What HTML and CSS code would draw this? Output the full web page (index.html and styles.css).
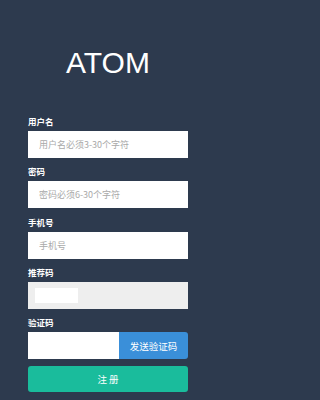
FILE: index.html
```html
<!DOCTYPE html>
<html lang="zh-CN">
<head>
<meta charset="utf-8">
<title>ATOM 注册</title>
<link rel="stylesheet" href="styles.css">
</head>
<body>
<div class="page">
  <h1 class="title">ATOM</h1>
  <form class="form">
    <div class="group">
      <label class="label">用户名</label>
      <input class="field" type="text" placeholder="用户名必须3-30个字符">
    </div>
    <div class="group">
      <label class="label">密码</label>
      <input class="field" type="password" placeholder="密码必须6-30个字符">
    </div>
    <div class="group">
      <label class="label">手机号</label>
      <input class="field" type="text" placeholder="手机号">
    </div>
    <div class="group">
      <label class="label">推荐码</label>
      <div class="field field-disabled"><span class="chip"></span></div>
    </div>
    <div class="group">
      <label class="label">验证码</label>
      <div class="code-row">
        <input class="field code-field" type="text">
        <button class="send" type="button">发送验证码</button>
      </div>
    </div>
    <button class="submit" type="button">注 册</button>
  </form>
</div>
</body>
</html>
```
FILE: styles.css
```css
* { box-sizing: border-box; }
html, body {
  margin: 0;
  padding: 0;
  background: #2d3a4e;
}
body {
  width: 214px;
  height: 400px;
  overflow: hidden;
  font-family: "Noto Sans CJK SC", "Liberation Sans", sans-serif;
}
.page {
  padding: 46px 26px 0 28px;
}
.title {
  margin: 0;
  font-family: "Liberation Sans", Arial, sans-serif;
  font-weight: normal;
  font-size: 30px;
  line-height: 34px;
  color: #ffffff;
  text-align: center;
}
.form {
  margin-top: 35px;
}
.group {
  margin-bottom: 7.3px;
}
.label {
  display: block;
  height: 12px;
  line-height: 12px;
  font-size: 8.5px;
  font-weight: bold;
  color: #ffffff;
  margin-bottom: 4px;
}
.field {
  display: block;
  width: 100%;
  height: 27px;
  margin: 0;
  border: none;
  border-radius: 0;
  background: #ffffff;
  padding: 0 0 0 11px;
  font-family: "Noto Sans CJK SC", "Liberation Sans", sans-serif;
  font-size: 9px;
  color: #555;
  outline: none;
}
.field::placeholder {
  color: #a9a9a9;
}
.field-disabled {
  background: #eeeeee;
  display: flex;
  align-items: center;
  padding-left: 7px;
}
.chip {
  display: block;
  width: 43px;
  height: 15px;
  background: #ffffff;
}
.code-row {
  display: flex;
  height: 27px;
}
.code-field {
  width: 91px;
  flex: none;
}
.send {
  flex: 1;
  margin: 0;
  border: none;
  background: #3a8fd9;
  color: #ffffff;
  font-family: "Noto Sans CJK SC", sans-serif;
  font-size: 9.5px;
  padding: 0;
  border-radius: 0 3px 3px 0;
}
.submit {
  display: block;
  width: 100%;
  height: 26px;
  margin: 2px 0 0 0;
  border: none;
  border-radius: 3px;
  background: #1abc9c;
  color: #ffffff;
  font-family: "Noto Sans CJK SC", sans-serif;
  font-size: 9.5px;
  padding: 0;
}
```
